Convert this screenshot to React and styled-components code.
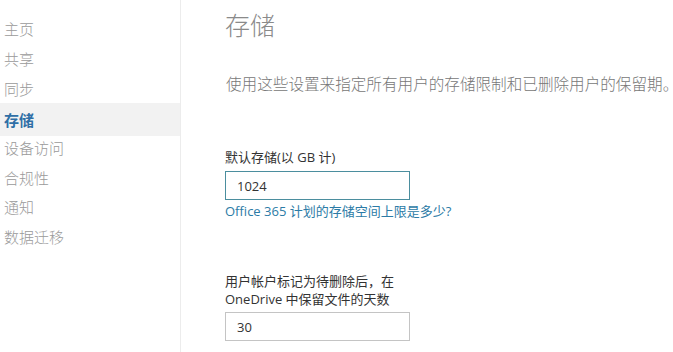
import React from "react";
import styled, { createGlobalStyle } from "styled-components";

const GlobalStyle = createGlobalStyle`
  html, body {
    margin: 0;
    padding: 0;
    background: #fff;
    font-family: "Open Sans", "Noto Sans CJK SC", sans-serif;
  }
`;

const Page = styled.div`
  display: flex;
  width: 673px;
  height: 352px;
  overflow: hidden;
  background: #fff;
`;

const Sidebar = styled.nav`
  width: 181px;
  flex-shrink: 0;
  border-right: 1px solid #ececec;
  padding-top: 14px;
  box-sizing: border-box;
`;

const NavItem = styled.div`
  height: ${(p) => (p.active ? "33px" : "29.7px")};
  margin-bottom: ${(p) => (p.active ? "-3.3px" : "0")};
  display: flex;
  align-items: center;
  padding-left: 4px;
  font-size: 15px;
  color: ${(p) => (p.active ? "#2f6fa6" : "#9a9a9a")};
  font-weight: ${(p) => (p.active ? 700 : 300)};
  background: ${(p) => (p.active ? "#f2f2f2" : "transparent")};
`;

const Main = styled.main`
  flex: 1;
  padding: 8px 0 0 44px;
  min-width: 0;
`;

const Title = styled.h1`
  margin: 0;
  font-size: 25px;
  font-weight: 300;
  color: #8a8a8a;
  line-height: 34px;
`;

const Description = styled.p`
  margin: 32px 0 0 1px;
  font-size: 15.6px;
  font-weight: 300;
  color: #777;
  line-height: 20px;
  white-space: nowrap;
`;

const Field = styled.div`
  margin-top: ${(p) => p.top}px;
  display: flex;
  flex-direction: column;
`;

const Label = styled.label`
  font-size: 13px;
  color: #333;
  line-height: 18px;
`;

const Input = styled.input`
  width: 185px;
  height: 29px;
  box-sizing: border-box;
  margin-top: ${(p) => p.gap}px;
  padding: 0 11px;
  font-family: inherit;
  font-size: 13px;
  color: #333;
  border: 1px solid ${(p) => (p.focused ? "#4b8e9e" : "#c4c4c4")};
  outline: none;
  background: #fff;
`;

const HelpLink = styled.a`
  font-size: 13px;
  color: #2c7ba6;
  text-decoration: none;
  line-height: 22px;
`;

const navItems = ["主页", "共享", "同步", "存储", "设备访问", "合规性", "通知", "数据迁移"];

export default function App() {
  return (
    <>
      <GlobalStyle />
      <Page>
        <Sidebar>
          {navItems.map((item) => (
            <NavItem key={item} active={item === "存储"}>
              {item}
            </NavItem>
          ))}
        </Sidebar>
        <Main>
          <Title>存储</Title>
          <Description>使用这些设置来指定所有用户的存储限制和已删除用户的保留期。</Description>
          <Field top={54}>
            <Label>默认存储(以 GB 计)</Label>
            <Input focused gap={5} defaultValue="1024" />
            <HelpLink href="#">Office 365 计划的存储空间上限是多少?</HelpLink>
          </Field>
          <Field top={50}>
            <Label>
              用户帐户标记为待删除后，在
              <br />
              OneDrive 中保留文件的天数
            </Label>
            <Input gap={4} defaultValue="30" />
          </Field>
        </Main>
      </Page>
    </>
  );
}
